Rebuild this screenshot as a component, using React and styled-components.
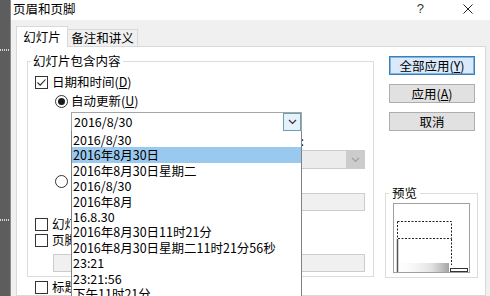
import React from 'react'
import styled, { createGlobalStyle } from 'styled-components'

const GlobalStyle = createGlobalStyle`
  html, body {
    margin: 0;
    padding: 0;
  }
  body {
    font-family: 'Noto Sans CJK SC', 'Noto Sans', sans-serif;
    font-size: 12.5px;
    color: #000;
    background: #fff;
  }
`

const Screen = styled.div`
  display: flex;
  width: 490px;
  height: 296px;
  overflow: hidden;
`

const Backdrop = styled.div`
  width: 10px;
  flex-shrink: 0;
  background: #5d5d5d;
  border-right: 1px solid #8c8c8c;
  display: flex;
  flex-direction: column;
  padding-top: 49px;
`

const Grip = styled.div`
  height: 2px;
  margin-bottom: ${p => p.gap || 0}px;
  background: repeating-linear-gradient(to right, #d4d4d4 0 1px, transparent 1px 2px);
`

const Dialog = styled.div`
  flex: 1;
  min-width: 0;
  display: flex;
  flex-direction: column;
  background: #f0f0f0;
`

const TitleBar = styled.div`
  height: 20px;
  flex-shrink: 0;
  display: flex;
  align-items: flex-start;
  padding: 1px 17px 0 2px;
  box-sizing: border-box;
  background: #fff;
  line-height: 16px;
`

const Title = styled.span`
  flex: 1;
`

const Help = styled.span`
  font-family: 'Liberation Sans', sans-serif;
  font-size: 13px;
  color: #333;
  margin-right: 39px;
`

const Close = styled.svg`
  width: 10px;
  height: 10px;
  margin-top: 3px;
`

const TabStrip = styled.div`
  height: 21px;
  flex-shrink: 0;
  display: flex;
  align-items: flex-end;
  padding: 5px 0 0 5px;
`

const Tab = styled.div`
  position: relative;
  z-index: 1;
  box-sizing: border-box;
  width: ${p => p.width}px;
  height: ${p => (p.active ? 21 : 17)}px;
  margin-bottom: ${p => (p.active ? -1 : 0)}px;
  display: flex;
  align-items: center;
  justify-content: center;
  background: ${p => (p.active ? '#fff' : '#f0f0f0')};
  border: 1px solid #d9d9d9;
  border-bottom: none;
  border-left: ${p => (p.active ? '1px solid #d9d9d9' : 'none')};
  line-height: 16px;
`

const Panel = styled.div`
  flex: 1;
  width: 470px;
  box-sizing: border-box;
  margin-left: 5px;
  display: flex;
  align-items: flex-start;
  padding: 6px 0 0 10px;
  background: #fff;
  border: 1px solid #d9d9d9;
`

const LeftColumn = styled.div`
  display: flex;
  flex-direction: column;
  width: 347px;
`

const Group = styled.fieldset`
  box-sizing: border-box;
  width: ${p => p.width}px;
  margin: ${p => p.top || 0}px 0 0 0;
  padding: 0 7px 4px 7px;
  border: 1px solid #dcdcdc;
  display: flex;
  flex-direction: column;
  min-width: 0;
`

const Legend = styled.legend`
  margin-left: -4px;
  padding: 0 ${p => p.pad || 2}px;
  line-height: 16px;
`

const OptionRow = styled.div`
  display: flex;
  align-items: center;
  height: 16px;
  margin: ${p => p.top || 0}px 0 0 ${p => p.indent || 0}px;
  gap: ${p => p.gap || 4}px;
  line-height: 16px;
  white-space: nowrap;
`

const Box = styled.span`
  box-sizing: border-box;
  width: 13px;
  height: 13px;
  flex-shrink: 0;
  border: 1px solid #333;
  background: #fff;
  display: flex;
  align-items: center;
  justify-content: center;
`

const Radio = styled.span`
  box-sizing: border-box;
  width: 13px;
  height: 13px;
  flex-shrink: 0;
  border: 1px solid #333;
  border-radius: 50%;
  background: #fff;
  display: flex;
  align-items: center;
  justify-content: center;
  &::after {
    content: '';
    display: ${p => (p.on ? 'block' : 'none')};
    width: 7px;
    height: 7px;
    border-radius: 50%;
    background: #1a1a1a;
  }
`

const ComboWrap = styled.div`
  position: relative;
  margin: 3px 0 0 36px;
  width: 231px;
`

const Combo = styled.div`
  box-sizing: border-box;
  height: ${p => p.height || 20}px;
  display: flex;
  align-items: center;
  padding-left: 2px;
  background: ${p => (p.disabled ? '#ececec' : '#fff')};
  border: 1px solid ${p => (p.disabled ? '#cccccc' : '#a6a6a6')};
  line-height: 16px;
`

const ComboText = styled.span`
  flex: 1;
  white-space: nowrap;
  overflow: hidden;
`

const ArrowButton = styled.span`
  box-sizing: border-box;
  width: 18px;
  height: 100%;
  display: flex;
  align-items: center;
  justify-content: center;
  background: ${p => (p.disabled ? '#cccccc' : '#e5f1fb')};
  border: ${p => (p.disabled ? 'none' : '1px solid #6b9fb5')};
`

const List = styled.div`
  position: absolute;
  z-index: 5;
  top: 19px;
  left: 0;
  box-sizing: border-box;
  width: 231px;
  padding-top: 1px;
  background: #fff;
  border: 1px solid #828282;
  border-top: none;
`

const ListItem = styled.div`
  height: 15.4px;
  line-height: 15.4px;
  padding-left: 1px;
  white-space: nowrap;
  background: ${p => (p.selected ? '#99c9ef' : 'transparent')};
`

const FieldRow = styled.div`
  display: flex;
  margin-left: 36px;
  gap: 13px;
`

const SubField = styled.div`
  display: flex;
  flex-direction: column;
  width: ${p => p.width}px;
`

const FieldLabel = styled.div`
  height: 18px;
  line-height: 18px;
  white-space: nowrap;
`

const TextBox = styled.div`
  box-sizing: border-box;
  height: 18px;
  margin: ${p => p.top || 0}px 0 0 ${p => p.indent || 0}px;
  width: ${p => p.width}px;
  background: #f0f0f0;
  border: 1px solid #cccccc;
`

const RightColumn = styled.div`
  display: flex;
  flex-direction: column;
  margin-left: 11px;
  width: 93px;
`

const Button = styled.div`
  box-sizing: border-box;
  width: 86px;
  height: 19px;
  margin: ${p => p.top}px 0 0 4px;
  display: flex;
  align-items: center;
  justify-content: center;
  background: ${p => (p.primary ? '#dbeafa' : '#e1e1e1')};
  border: 1px solid ${p => (p.primary ? '#3c7fb1' : '#adadad')};
  box-shadow: ${p => (p.primary ? 'inset 0 0 0 1px #7eb4ea' : 'none')};
  line-height: 16px;
  white-space: nowrap;
`

const Thumb = styled.svg`
  display: block;
  width: 77px;
  height: 70px;
  margin-top: 2px;
`

const Key = styled.u`
  text-underline-offset: 1px;
`

const Check = () => (
  <Box>
    <svg width="11" height="11" viewBox="0 0 11 11">
      <polyline points="1.5,5.5 4.2,8.2 9.5,2.5" fill="none" stroke="#222" strokeWidth="1.1" />
    </svg>
  </Box>
)

const Chevron = ({ color }) => (
  <svg width="9" height="6" viewBox="0 0 9 6">
    <polyline points="1,1 4.5,4.5 8,1" fill="none" stroke={color} strokeWidth="1.2" />
  </svg>
)

const formats = [
  '2016/8/30',
  '2016年8月30日',
  '2016年8月30日星期二',
  '2016/8/30',
  '2016年8月',
  '16.8.30',
  '2016年8月30日11时21分',
  '2016年8月30日星期二11时21分56秒',
  '23:21',
  '23:21:56',
  '下午11时21分',
  '下午11时21分56秒',
]

export default function App() {
  return (
    <>
      <GlobalStyle />
      <Screen>
        <Backdrop>
          <Grip gap={168} />
          <Grip />
        </Backdrop>
        <Dialog>
          <TitleBar>
            <Title>页眉和页脚</Title>
            <Help>?</Help>
            <Close viewBox="0 0 10 10">
              <path d="M0.5 0.5 L9.5 9.5 M9.5 0.5 L0.5 9.5" stroke="#222" strokeWidth="1" />
            </Close>
          </TitleBar>
          <TabStrip>
            <Tab active width={52}>幻灯片</Tab>
            <Tab width={70}>备注和讲义</Tab>
          </TabStrip>
          <Panel>
            <LeftColumn>
              <Group width={347}>
                <Legend>幻灯片包含内容</Legend>
                <OptionRow top={5}>
                  <Check />
                  <span>日期和时间(<Key>D</Key>)</span>
                </OptionRow>
                <OptionRow top={3} indent={20} gap={3}>
                  <Radio on />
                  <span>自动更新(<Key>U</Key>)</span>
                </OptionRow>
                <ComboWrap>
                  <Combo>
                    <ComboText>2016/8/30</ComboText>
                    <ArrowButton>
                      <Chevron color="#333" />
                    </ArrowButton>
                  </Combo>
                  <List>
                    {formats.map((f, i) => (
                      <ListItem key={i} selected={i === 1}>{f}</ListItem>
                    ))}
                  </List>
                </ComboWrap>
                <FieldRow>
                  <SubField width={150}>
                    <FieldLabel>语言(国家/地区)(L):</FieldLabel>
                    <Combo height={19} disabled>
                      <ComboText>中文(中国)</ComboText>
                      <ArrowButton disabled>
                        <Chevron color="#a0a0a0" />
                      </ArrowButton>
                    </Combo>
                  </SubField>
                  <SubField width={131}>
                    <FieldLabel>日历类型(C):</FieldLabel>
                    <Combo height={19} disabled>
                      <ComboText>公历</ComboText>
                      <ArrowButton disabled>
                        <Chevron color="#a0a0a0" />
                      </ArrowButton>
                    </Combo>
                  </SubField>
                </FieldRow>
                <OptionRow top={4} indent={20} gap={3}>
                  <Radio />
                  <span>固定(<Key>X</Key>)</span>
                </OptionRow>
                <TextBox top={4} indent={36} width={294} />
                <OptionRow top={5}>
                  <Box />
                  <span>幻灯片编号(<Key>N</Key>)</span>
                </OptionRow>
                <OptionRow>
                  <Box />
                  <span>页脚(<Key>F</Key>)</span>
                </OptionRow>
                <TextBox top={6} indent={18} width={312} />
              </Group>
              <OptionRow top={2} indent={8}>
                <Box />
                <span>标题幻灯片中不显示(<Key>S</Key>)</span>
              </OptionRow>
            </LeftColumn>
            <RightColumn>
              <Button primary top={3}>全部应用(<Key>Y</Key>)</Button>
              <Button top={9}>应用(<Key>A</Key>)</Button>
              <Button top={9}>取消</Button>
              <Group width={93} top={54}>
                <Legend pad={3}>预览</Legend>
                <Thumb viewBox="0 0 77 70">
                  <defs>
                    <linearGradient id="shade" x1="0" y1="0" x2="1" y2="0">
                      <stop offset="0" stopColor="#ffffff" stopOpacity="0" />
                      <stop offset="0.7" stopColor="#d8d8d8" stopOpacity="0.8" />
                      <stop offset="1" stopColor="#9a9a9a" stopOpacity="0.9" />
                    </linearGradient>
                  </defs>
                  <rect x="0.5" y="0.5" width="76" height="69" fill="#fff" stroke="#a0a0a0" />
                  <rect x="0" y="60" width="56" height="9" fill="url(#shade)" />
                  <rect x="4.5" y="18.5" width="54" height="17" fill="none" stroke="#222" strokeDasharray="2 1.5" />
                  <line x1="4.5" y1="36" x2="4.5" y2="69" stroke="#555" strokeWidth="1.5" />
                  <line x1="58.5" y1="36" x2="58.5" y2="62" stroke="#222" strokeDasharray="2 1.5" />
                  <rect x="57.5" y="65.5" width="17" height="3" fill="#fff" stroke="#333" />
                </Thumb>
              </Group>
            </RightColumn>
          </Panel>
        </Dialog>
      </Screen>
    </>
  )
}
